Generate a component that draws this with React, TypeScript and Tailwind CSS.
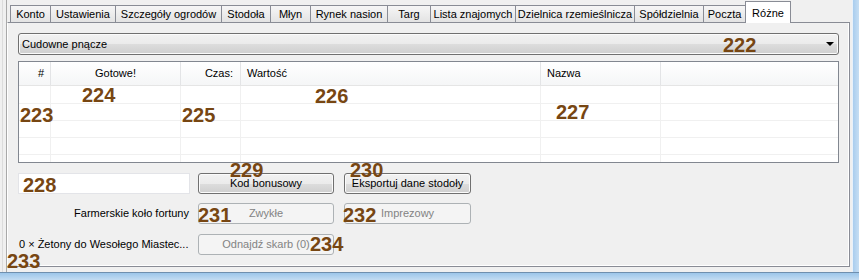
import React from "react";

const tabs: [string, number][] = [
  ["Konto", 41],
  ["Ustawienia", 66],
  ["Szczegóły ogrodów", 107],
  ["Stodoła", 50],
  ["Młyn", 41],
  ["Rynek nasion", 78],
  ["Targ", 44],
  ["Lista znajomych", 86],
  ["Dzielnica rzemieślnicza", 120],
  ["Spółdzielnia", 70],
  ["Poczta", 43],
];

const marks: [string, number, number][] = [
  ["222", 723, 35],
  ["223", 20, 105],
  ["224", 82, 85],
  ["225", 182, 105],
  ["226", 315, 86],
  ["227", 556, 102],
  ["228", 23, 175],
  ["229", 230, 160],
  ["230", 350, 160],
  ["231", 198, 205],
  ["232", 343, 205],
  ["233", 7, 251],
  ["234", 310, 234],
];

const cols = ["#", "Gotowe!", "Czas:", "Wartość", "Nazwa", ""];
const colAlign = ["justify-end pr-[6px]", "justify-center", "justify-end pr-[7px]", "pl-[6px]", "pl-[6px]", ""];

const Button = ({ label, width, disabled }: { label: string; width: string; disabled?: boolean }) =>
  disabled ? (
    <div className={`${width} h-[21px] flex items-center justify-center rounded-[3px] border border-[#adb2b5] bg-[#f4f4f4] text-[#838383]`}>
      {label}
    </div>
  ) : (
    <div
      className={`${width} h-[21px] flex items-center justify-center rounded-[3px] border border-[#707070] bg-[linear-gradient(to_bottom,#f2f2f2_0%,#ebebeb_50%,#dddddd_50%,#cfcfcf_100%)] shadow-[inset_0_0_0_1px_#fbfbfb]`}
    >
      {label}
    </div>
  );

export default function App() {
  return (
    <div className="relative w-[859px] h-[280px] overflow-hidden bg-[#f0f0f0] text-[11px] text-black font-['Liberation_Sans',Arial,sans-serif]">
      <div className="flex h-[272px]">
        <div className="w-[852px] flex">
          <div className="w-[2px] shrink-0" />
          <div className="w-px shrink-0 bg-[#dcdcdc]" />
          <div className="w-[3px] shrink-0" />
          <div className="w-px shrink-0 bg-[#a9a9a9]" />

          {/* tab control */}
          <div className="w-[843px] flex flex-col">
            <div className="h-[22px] flex items-end pl-[3px]">
              {tabs.map(([name, w], i) => (
                <div
                  key={name}
                  style={{ width: w }}
                  className={`${i > 0 ? "-ml-px" : ""} h-[17px] shrink-0 flex items-center justify-center whitespace-nowrap border border-b-0 border-[#898c95] bg-linear-to-b from-[#f6f6f6] to-[#e3e3e3]`}
                >
                  {name}
                </div>
              ))}
              <div className="-ml-px w-[46px] h-[22px] -mb-px relative z-10 shrink-0 flex justify-center pt-[3px] border border-b-0 border-[#898c95] bg-white">
                Różne
              </div>
            </div>

            <div className="h-[245px] border border-[#898c95] border-l-white bg-[#f0f0f0] shadow-[inset_-1px_-1px_0_#ffffff] pt-[10px] pl-[10px] pr-[10px]">
              {/* combobox */}
              <div className="h-[22px] flex items-center justify-between pl-[3px] pr-[4px] rounded-[3px] border border-[#707070] bg-[linear-gradient(to_bottom,#f2f2f2_0%,#ebebeb_50%,#dddddd_50%,#cfcfcf_100%)] shadow-[inset_0_0_0_1px_#fbfbfb]">
                <span>Cudowne pnącze</span>
                <svg width="8" height="4" viewBox="0 0 8 4">
                  <polygon points="0,0 8,0 4,4" fill="#000" />
                </svg>
              </div>

              {/* list view */}
              <div className="mt-[6px] h-[102px] border border-[#828790] bg-white overflow-hidden">
                <div className="h-[24px] grid grid-cols-[32px_130px_60px_300px_120px_1fr] border-b border-[#e5e5e5] bg-linear-to-b from-white to-[#f5f6f7]">
                  {cols.map((c, i) => (
                    <div
                      key={i}
                      className={`flex items-center ${colAlign[i]} ${i < 5 ? "border-r border-[#e3e4e6]" : ""}`}
                    >
                      {c}
                    </div>
                  ))}
                </div>
                {[18, 17, 17, 17, 17].map((h, r) => (
                  <div
                    key={r}
                    style={{ height: h }}
                    className="grid grid-cols-[32px_130px_60px_300px_120px_1fr] border-b border-[#f0f0f0]"
                  >
                    {cols.map((_, i) => (
                      <div key={i} className={i < 5 ? "border-r border-[#f0f0f0]" : ""} />
                    ))}
                  </div>
                ))}
              </div>

              {/* bottom controls */}
              <div className="mt-[10px] flex">
                <div className="w-[172px] h-[21px] bg-white border border-[#e3e4e8]" />
                <div className="ml-[8px]">
                  <Button label="Kod bonusowy" width="w-[136px]" />
                </div>
                <div className="ml-[10px]">
                  <Button label="Eksportuj dane stodoły" width="w-[127px]" />
                </div>
              </div>
              <div className="mt-[9px] flex">
                <div className="w-[172px] h-[21px] flex items-center justify-end pr-[1px] whitespace-nowrap">
                  Farmerskie koło fortuny
                </div>
                <div className="ml-[8px]">
                  <Button label="Zwykłe" width="w-[136px]" disabled />
                </div>
                <div className="ml-[10px]">
                  <Button label="Imprezowy" width="w-[127px]" disabled />
                </div>
              </div>
              <div className="mt-[10px] flex">
                <div className="w-[172px] h-[21px] flex items-center pl-[1px] whitespace-nowrap">
                  0 × Żetony do Wesołego Miastec...
                </div>
                <div className="ml-[8px]">
                  <Button label="Odnajdź skarb (0)" width="w-[136px]" disabled />
                </div>
              </div>
            </div>
          </div>
        </div>

        {/* window frame, right */}
        <div className="w-[7px] flex">
          <div className="w-px bg-[#e8f1fa]" />
          <div className="flex-1 bg-linear-to-r from-[#a9cdee] to-[#c6def3]" />
        </div>
      </div>

      {/* window frame, bottom */}
      <div className="h-[8px] border-t border-[#6f8fae] bg-linear-to-b from-[#9cc6ea] to-[#c3dcf2]" />

      {marks.map(([n, x, y]) => (
        <span
          key={n}
          style={{ left: x, top: y }}
          className="absolute text-[20px] font-bold leading-none text-[#774612] font-['Liberation_Sans',Arial,sans-serif]"
        >
          {n}
        </span>
      ))}
    </div>
  );
}
